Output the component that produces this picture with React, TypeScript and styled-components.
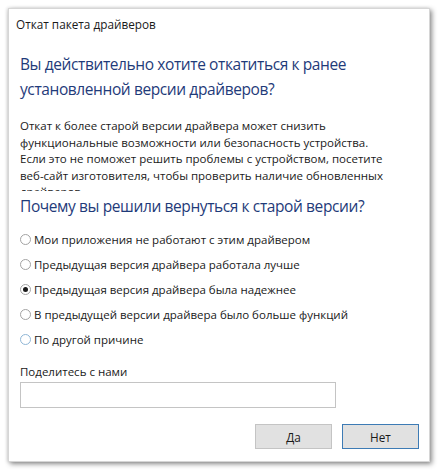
import styled, { createGlobalStyle } from 'styled-components';

const GlobalStyle = createGlobalStyle`
  html, body {
    margin: 0;
    padding: 0;
    background: #ffffff;
  }
  body {
    font-family: 'Open Sans', 'Noto Sans', sans-serif;
  }
`;

const reasons = [
  'Мои приложения не работают с этим драйвером',
  'Предыдущая версия драйвера работала лучше',
  'Предыдущая версия драйвера была надежнее',
  'В предыдущей версии драйвера было больше функций',
  'По другой причине',
];

export default function App() {
  return (
    <>
      <GlobalStyle />
      <Page>
        <Dialog>
          <WindowTitle>Откат пакета драйверов</WindowTitle>
          <Body>
            <MainInstruction>
              Вы действительно хотите откатиться к ранее
              <br />
              установленной версии драйверов?
            </MainInstruction>
            <ScrollText>
              Откат к более старой версии драйвера может снизить
              <br />
              функциональные возможности или безопасность устройства.
              <br />
              Если это не поможет решить проблемы с устройством, посетите
              <br />
              веб-сайт изготовителя, чтобы проверить наличие обновленных
              <br />
              драйверов.
            </ScrollText>
            <Question>Почему вы решили вернуться к старой версии?</Question>
            <RadioList>
              {reasons.map((reason, index) => (
                <RadioRow key={index}>
                  <RadioCircle checked={index === 2} hover={index === 4} />
                  {reason}
                </RadioRow>
              ))}
            </RadioList>
            <FieldLabel>Поделитесь с нами</FieldLabel>
            <TextInput />
          </Body>
          <Footer>
            <Button>Да</Button>
            <Button primary>Нет</Button>
          </Footer>
        </Dialog>
      </Page>
    </>
  );
}

const Page = styled.div`
  width: 440px;
  height: 472px;
  padding: 8px 10px 10px 8px;
  box-sizing: border-box;
`;

const Dialog = styled.div`
  width: 422px;
  height: 454px;
  box-sizing: border-box;
  background: #ffffff;
  border: 1px solid #d6d6d6;
  box-shadow: 2px 2px 5px rgba(0, 0, 0, 0.45), -1px 0 3px rgba(0, 0, 0, 0.12);
  display: flex;
  flex-direction: column;
`;

const WindowTitle = styled.div`
  font-size: 11.75px;
  line-height: 16px;
  color: #1a1a1a;
  padding: 7px 0 0 7px;
`;

const Body = styled.div`
  padding: 0 0 0 11px;
  flex: 1;
  display: flex;
  flex-direction: column;
`;

const MainInstruction = styled.div`
  font-size: 15.5px;
  letter-spacing: -0.4px;
  line-height: 25px;
  color: #1f3b7a;
  margin-top: 20px;
`;

const ScrollText = styled.div`
  font-size: 11.5px;
  line-height: 16.5px;
  color: #1a1a1a;
  height: 73px;
  overflow: hidden;
  margin-top: 16px;
`;

const Question = styled.div`
  font-size: 15.5px;
  letter-spacing: -0.4px;
  line-height: 22px;
  color: #1f3b7a;
  margin-top: 4px;
`;

const RadioList = styled.div`
  display: flex;
  flex-direction: column;
  margin-top: 10px;
`;

const RadioRow = styled.label`
  display: flex;
  align-items: center;
  gap: 3px;
  height: 25px;
  font-size: 11.5px;
  color: #1a1a1a;
`;

const RadioCircle = styled.span<{ checked?: boolean; hover?: boolean }>`
  width: 11px;
  height: 11px;
  box-sizing: border-box;
  border-radius: 50%;
  border: 1px solid ${({ hover }) => (hover ? '#8fb6d6' : '#a3a3a3')};
  background: #ffffff;
  position: relative;
  flex: none;

  &::after {
    content: '';
    display: ${({ checked }) => (checked ? 'block' : 'none')};
    position: absolute;
    left: 2px;
    top: 2px;
    width: 5px;
    height: 5px;
    border-radius: 50%;
    background: #1a1a1a;
  }
`;

const FieldLabel = styled.div`
  font-size: 11.5px;
  line-height: 16px;
  color: #1a1a1a;
  margin-top: 12px;
`;

const TextInput = styled.div`
  width: 316px;
  height: 26px;
  box-sizing: border-box;
  border: 1px solid #c4c4c4;
  margin-top: 2px;
`;

const Footer = styled.div`
  display: flex;
  justify-content: flex-end;
  gap: 10px;
  padding: 0 10px 12px 0;
`;

const Button = styled.button<{ primary?: boolean }>`
  width: 77px;
  height: 25px;
  box-sizing: border-box;
  font-family: 'Open Sans', 'Noto Sans', sans-serif;
  font-size: 11.75px;
  color: #1a1a1a;
  background: #e1e1e1;
  border: 1px solid ${({ primary }) => (primary ? '#3d7bb5' : '#c4c4c4')};
  padding: 0;
`;
